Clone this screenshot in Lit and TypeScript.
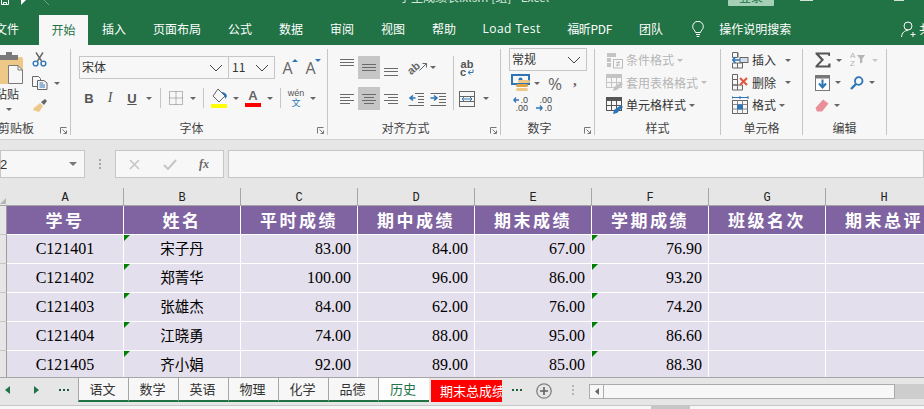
import { LitElement, html, css, svg } from "lit";
import { customElement } from "lit/decorators.js";

const s = (w: number, h: number, body: unknown) =>
  html`<svg width=${w} height=${h} viewBox="0 0 ${w} ${h}" fill="none">${body}</svg>`;
const lines = (w: number, h: number, ls: number[][], c = "#6a6a6a") =>
  s(w, h, ls.map(([a, b, y]) => svg`<line x1=${a} x2=${b} y1=${y} y2=${y} stroke=${c} stroke-width="1"/>`));
const caret = html`<i class="caret"></i>`;
const chevron = s(14, 8, svg`<polyline points="1,1 7,7 13,1" stroke="#444" stroke-width="1"/>`);
const launcher = html`<span class="launch">${s(7, 7, svg`<path d="M0.5 6.5V0.5H6.5M2.5 2.5L6 6M6.5 3.5V6.5H3.5" stroke="#777"/>`)}</span>`;

const scissors = s(15, 15, svg`<path d="M4 0.5L9.5 9M11 0.5L5.5 9" stroke="#666" stroke-width="1.4"/><circle cx="3.6" cy="11.5" r="2.4" stroke="#2e75b6" stroke-width="1.4"/><circle cx="11.4" cy="11.5" r="2.4" stroke="#2e75b6" stroke-width="1.4"/>`);
const copyIcon = s(16, 14, svg`<path d="M0.5 0.5H6.5L8.5 2.5V10.5H0.5Z" fill="#f7f7f7" stroke="#666"/><path d="M5.5 4.5H12L15 7V13.5H5.5Z" fill="#f7f7f7" stroke="#666"/><path d="M7.5 7H11M7.5 9H13M7.5 11H13" stroke="#2e75b6"/>`);
const painter = s(16, 15, svg`<path d="M8 5L11 8L7 14L1 12L2 10Z" fill="#edc887"/><path d="M9 4L13 1L15 3L12 7Z" fill="#666"/>`);
const clipboard = s(26, 33, svg`<path d="M0 5H23Q25 5 25 7V32H0Z" fill="#edc887"/><path d="M2 3H8V0H14V3H20V8H2Z" fill="#7a7a7a"/><path d="M10.5 13.5H20L24.5 18V31.5H10.5Z" fill="#f7f7f7" stroke="#7a7a7a"/><path d="M20 13.5V18H24.5" stroke="#7a7a7a"/>`);

const borderIcon = s(14, 14, svg`<path d="M0.5 0.5H13.5V13.5H0.5ZM7 0.5V13.5M0.5 7H13.5" stroke="#777" stroke-dasharray="1 1"/>`);
const bucket = s(17, 20, svg`<path d="M7 1L14 8L8 14L2 8Z" fill="#f7f7f7" stroke="#666"/><path d="M10 4Q15 4 16 8L14.5 11L13 7Z" fill="#2e75b6"/><rect x="0" y="16" width="16" height="4" fill="#ffff00"/>`);

const indentL = s(17, 14, svg`<path d="M7 1.5H16M10 4.5H16M10 7.5H16M10 10.5H16M0.5 13.5H16" stroke="#666"/><path d="M7.5 6H3M5 3.5L2 6L5 8.5" stroke="#2e75b6" stroke-width="1.6"/>`);
const indentR = s(17, 14, svg`<path d="M0.5 1.5H16M9 4.5H16M9 7.5H16M9 10.5H16M0.5 13.5H16" stroke="#666"/><path d="M0.5 6H6M4 3.5L7 6L4 8.5" stroke="#2e75b6" stroke-width="1.6"/>`);
const merge = s(16, 16, svg`<rect x="0.5" y="0.5" width="15" height="15" stroke="#666"/><path d="M0.5 5.5H15.5M0.5 10.5H15.5" stroke="#666"/><rect x="1" y="6" width="14" height="4" fill="#f7f7f7"/><path d="M3 8H13M5 6L3 8L5 10M11 6L13 8L11 10" stroke="#2e75b6"/>`);
const orientArrow = s(9, 9, svg`<path d="M0.5 8.5L7.5 1.5M3.5 1.5H7.5V5.5" stroke="#666"/>`);
const wrapArrow = s(7, 6, svg`<path d="M6 0.5V3.5H1.5M3.5 1.5L1 3.5L3.5 5.5" stroke="#2e75b6"/>`);
const currency = s(20, 19, svg`<rect x="1" y="1" width="17" height="9" stroke="#2e75b6" stroke-width="2"/><circle cx="9.5" cy="5.5" r="2" fill="#2e75b6"/><rect x="7" y="6" width="12" height="3" rx="1.5" fill="#edc887"/><rect x="5" y="10" width="12" height="3" rx="1.5" fill="#d9a441"/><rect x="5" y="14" width="12" height="3" rx="1.5" fill="#edc887"/>`);
const blueLeft = s(6, 6, svg`<path d="M6 3H1M3 0.5L0.8 3L3 5.5" stroke="#2e75b6" stroke-width="1.3"/>`);
const blueRight = s(7, 6, svg`<path d="M0 3H6M4 0.5L6.2 3L4 5.5" stroke="#2e75b6" stroke-width="1.3"/>`);

const condIcon = s(17, 17, svg`<path d="M1 1H10V5H1ZM1 6H5V10H1ZM1 11H5V15H1Z" fill="#c4c4c4"/><rect x="7.5" y="7.5" width="9" height="8.5" fill="#f7f7f7" stroke="#bcbcbc"/><path d="M10 10.5H14M10 13H14M13 9L11 14.5" stroke="#bcbcbc"/>`);
const tableIcon = (stroke: string, brush: string) =>
  s(17, 17, svg`<rect x="0.5" y="0.5" width="15" height="13" stroke=${stroke}/><rect x="1" y="1" width="14" height="3" fill=${stroke}/><path d="M5.5 4V13M10.5 4V13M1 8.5H15" stroke=${stroke}/><path d="M15 8L17 10L11 16L7 17L8 13Z" fill=${brush}/>`);
const insertIcon = s(17, 17, svg`<path d="M0.5 0.5H5.5V5.5H0.5ZM6 0.5V5.5M0.5 11H5.5V16H0.5ZM5.5 11H10.5V16H5.5Z" stroke="#666"/><rect x="8" y="5.5" width="8" height="5" fill="#cfdfef" stroke="#666"/><path d="M8 8H1M3.5 5L0.8 8L3.5 11" stroke="#2e75b6" stroke-width="1.5"/>`);
const deleteIcon = s(17, 17, svg`<path d="M0.5 0.5H5.5V5.5H0.5ZM0.5 11H5.5V16H0.5ZM5.5 11H10.5V16H5.5ZM0.5 5.5H5.5V11H0.5Z" stroke="#666"/><path d="M8 4L15 11M15 4L8 11" stroke="#e2553f" stroke-width="2"/>`);
const formatIcon = s(17, 18, svg`<path d="M0 1.5H16M0 0V3M8 0V3M16 0V3" stroke="#2e75b6"/><rect x="0.5" y="4.5" width="15" height="13" stroke="#666"/><path d="M0.5 8.5H15.5M0.5 13H15.5M5.5 4.5V17.5M10.5 4.5V17.5" stroke="#888"/><rect x="5" y="8.5" width="6" height="5" fill="#2e75b6"/>`);
const sigma = s(16, 16, svg`<path d="M0.5 0.5H15V4H13.5L13 2.5H4L9 7.8L3.5 13.5H13L13.5 11.5H15.5V15.5H0.5V13.8L6 8L0.5 2Z" fill="#555"/>`);
const sortIcon = s(17, 16, svg`<path d="M7 3H15L12.3 7V10.5L10 11.5V7Z" fill="#b5b5b5"/>`);
const fillIcon = s(15, 16, svg`<rect x="0.5" y="0.5" width="14" height="15" fill="#fff" stroke="#777"/><rect x="1" y="1" width="13" height="2.5" fill="#777"/><path d="M7.5 4.5V12M4 8.5L7.5 12.5L11 8.5" stroke="#2e75b6" stroke-width="2"/>`);
const searchIcon = s(14, 14, svg`<circle cx="8.7" cy="5" r="3.8" stroke="#2e75b6" stroke-width="1.8"/><path d="M6 8L1 13" stroke="#2e75b6" stroke-width="2.4"/>`);
const eraser = s(14, 13, svg`<path d="M8 0.5L13.5 4.5L7 12.5L2 12.5L0.5 9Z" fill="#ea8f99"/>`);
const bulb = s(12, 17, svg`<path d="M3.5 11.5C3 9 0.7 8.5 0.7 5.6A5.3 5.3 0 0 1 11.3 5.6C11.3 8.5 9 9 8.5 11.5ZM4 13.5H8M4.7 15.5H7.3" stroke="#fff"/>`);
const userIcon = s(15, 17, svg`<circle cx="7" cy="5" r="4" stroke="#fff"/><path d="M0.5 16C1 11.5 3.5 9.5 7 9.5M9.5 13.5H14.5M12 11V16" stroke="#fff"/>`);
const saveIcon = s(8, 6, svg`<path d="M0.5 0V4.5H7.5V0M2.5 4.5V2.5H5.5V4.5" stroke="#fff"/>`);
const undoIcon = s(7, 6, svg`<path d="M1 5L6 0H1" fill="#fff"/>`);
const redoIcon = s(7, 6, svg`<path d="M1 0L6 5" stroke="#6da384"/>`);
const xIcon = s(11, 11, svg`<path d="M1 1L10 10M10 1L1 10" stroke="#c6c6c6" stroke-width="1.6"/>`);
const checkIcon = s(14, 11, svg`<path d="M1 6L5 10L13 1" stroke="#c6c6c6" stroke-width="2"/>`);
const plusCircle = s(16, 16, svg`<circle cx="8" cy="8" r="7.2" stroke="#808080" stroke-width="1.3"/><path d="M8 4V12M4 8H12" stroke="#5f5f5f" stroke-width="1.6"/>`);

const columns = ["A", "B", "C", "D", "E", "F", "G", "H"];
const heads = ["学号", "姓名", "平时成绩", "期中成绩", "期末成绩", "学期成绩", "班级名次", "期末总评"];
const rows = [
  ["C121401", "宋子丹", "83.00", "84.00", "67.00", "76.90"],
  ["C121402", "郑菁华", "100.00", "96.00", "86.00", "93.20"],
  ["C121403", "张雄杰", "84.00", "62.00", "76.00", "74.20"],
  ["C121404", "江晓勇", "74.00", "88.00", "95.00", "86.60"],
  ["C121405", "齐小娟", "92.00", "89.00", "85.00", "88.30"],
];
const tabs = ["插入", "页面布局", "公式", "数据", "审阅", "视图", "帮助", "Load Test", "福昕PDF", "团队"];
const sheets = ["语文", "数学", "英语", "物理", "化学", "品德"];

@customElement("app-root")
export class AppRoot extends LitElement {
  static styles = css`
    :host { display: block; width: 924px; height: 409px; overflow: hidden; background: #f7f7f7; color: #444;
      font: 12px/1.2 "Noto Sans CJK SC", "Liberation Sans", sans-serif; }
    svg { display: block; flex: none; }
    .caret { display: block; flex: none; width: 0; height: 0; border: 3px solid transparent; border-top: 3.5px solid #666; border-bottom: 0; }

    .title { height: 14px; background: #217346; display: flex; overflow: hidden; color: #fff; }
    .title .q { display: flex; align-items: flex-start; padding-left: 1px; gap: 11px; width: 398px; flex: none; }
    .title .q svg:last-child { margin-left: 5px; }
    .title .name { margin-top: -11px; width: 329px; flex: none; font-size: 12px; line-height: 15px; white-space: nowrap; color: #d5e6db; }
    .login { width: 46px; height: 6px; flex: none; background: #a6d0b5; color: #217346; overflow: hidden; text-align: center; line-height: 15px; font-size: 12px; border-radius: 0 0 1px 1px; }
    .login span { display: block; margin-top: -11px; }
    .minb { width: 13px; height: 1px; background: #cfe3d7; margin-left: 26px; flex: none; }
    .maxb { width: 10px; height: 1px; background: #cfe3d7; margin-left: 81px; flex: none; }

    .tabs { height: 31px; background: #217346; display: flex; align-items: stretch; color: #fff; overflow: hidden; white-space: nowrap; }
    .tabs span { display: flex; align-items: center; padding: 0 13.5px; flex: none; }
    .tabs .file { padding: 0; margin-left: -5px; width: 44px; }
    .tabs .on { background: #f7f7f7; color: #217346; width: 49px; padding: 0 12.5px; box-sizing: border-box; margin-top: 1px; margin-right: 0.5px; }
    .tabs .lt { font-family: "Open Sans", sans-serif; letter-spacing: 0.45px; padding: 0 13px; }
    .tabs .pdf { padding: 0 13.5px; letter-spacing: -0.3px; }
    .tabs .bulb { padding: 0 0 0 15.5px; }
    .tabs .ask { padding: 0 0 0 15px; }
    .tabs .share { padding: 0 0 0 110px; gap: 3px; }

    .ribbon { height: 94px; display: flex; border-bottom: 1px solid #d2d2d2; background: #f7f7f7; }
    .g { position: relative; flex: none; height: 94px; box-sizing: border-box; display: flex; flex-direction: column; }
    .g.sep::after { content: ""; position: absolute; right: 0; top: 4px; bottom: 4px; width: 1px; background: #c6c6c6; }
    .body { height: 75px; box-sizing: border-box; }
    .lab { text-align: center; height: 16px; line-height: 16px; color: #444; padding-right: 1px; white-space: nowrap; }
    .launch { position: absolute; right: 4px; bottom: 5px; }
    .clip { width: 71px; } .font { width: 257px; } .align { width: 173px; } .num { width: 94px; }
    .sty { width: 126px; } .cell { width: 82px; } .edit { width: 84px; } .rest { flex: 1; }
    .font .lab { padding-right: 16px; }
    .align .lab { padding-right: 18px; }
    .num .lab { padding-right: 17px; }

    .clip .body { display: grid; grid-template-columns: 31px 38px; padding-top: 7px; }
    .paste { display: flex; flex-direction: column; align-items: flex-start; margin-left: -2px; }
    .paste b { font-weight: 400; color: #333; margin: 2px 0 0 -3px; line-height: 14px; white-space: nowrap; }
    .paste .caret { margin: 7px 0 0 8px; }
    .tools { display: flex; flex-direction: column; }
    .tools > * { margin-left: 1px; }
    .tools .copy { display: flex; align-items: center; gap: 6px; margin-top: 9px; }
    .tools .pt { margin-top: 8px; }
    .clip .lab { margin-left: -38px; }

    .font .body { padding: 11px 0 0 8px; }
    .frow { display: flex; height: 23px; }
    .sel { height: 23px; box-sizing: border-box; border: 1px solid #c6c6c6; background: #f7f7f7; display: flex; align-items: center; justify-content: space-between; padding: 0 5px 0 2px; color: #333; }
    .fname { width: 150px; } .fsize { width: 47px; margin-left: -1px; padding-left: 3px; }
    .big { position: relative; display: flex; font: 16px "Open Sans", sans-serif; color: #666; width: 23px; justify-content: center; align-items: center; }
    .big.first { margin-left: 1px; }
    .tri { position: absolute; right: 1px; top: 3px; width: 0; height: 0; border: 3px solid transparent; }
    .up { border-bottom: 3px solid #2e75b6; border-top: 0; }
    .dn { border-top: 3px solid #2e75b6; border-bottom: 0; }
    .frow2 { display: grid; height: 20px; margin-top: 9px; align-items: center; justify-items: center;
      grid-template-columns: 20px 22px 22px 12px 10px 22px 11px 10px 22px 11px 1px 22px 11px 10px 22px 11px; }
    .fb { font: bold 13px "Liberation Sans", sans-serif; color: #555; }
    .fi { font: italic 14px "Liberation Serif", serif; color: #555; }
    .fu { font: bold 13px "Liberation Sans", sans-serif; color: #555; text-decoration: underline; }
    .vs { width: 1px; height: 20px; background: #c6c6c6; }
    .fc { display: flex; flex-direction: column; align-items: center; width: 16px; font: bold 13px/13px "Liberation Sans", sans-serif; color: #666; }
    .fc i { display: block; width: 16px; height: 4px; background: #f00; margin-top: 1px; }
    .wen { display: flex; flex-direction: column; align-items: center; font: 9px/9px "Liberation Sans", sans-serif; color: #555; }
    .wen b { color: #2e75b6; font: 9px/9px "Noto Sans CJK SC", sans-serif; }

    .align .body { display: grid; padding: 11px 0 0 8px; grid-template-columns: 22px 22px 22px 28px 22px 3px 24px 14px; grid-template-rows: 23px 23px; row-gap: 8px; align-items: center; justify-items: center; }
    .hl { background: #c6c6c6; }
    .hl, .ac { height: 23px; width: 22px; display: flex; justify-content: center; }
    .al { justify-self: start; }
    .or { display: flex; align-items: center; margin-left: 6px; position: relative; width: 18px; height: 14px; }
    .or em { font: bold 11px "Liberation Sans", sans-serif; color: #666; transform: rotate(-40deg); display: block; margin-left: -1px; }
    .or svg { margin-left: -1px; margin-top: -3px; }
    .ind { margin-left: 6px; }
    .ind2 { margin-left: 0; }
    .vline { grid-row: 1 / 3; grid-column: 6; width: 1px; height: 54px; background: #c6c6c6; }
    .wrap { font: bold 11px/8px "Liberation Sans", sans-serif; color: #555; text-align: center; display: flex; flex-direction: column; align-items: center; }
    .wrap span { display: flex; align-items: center; gap: 1px; }

    .num .body { padding: 3px 0 0 8px; }
    .nsel { width: 78px; font-size: 12px; }
    .nrow { display: flex; align-items: center; height: 24px; }
    .nrow svg:first-child { margin-left: 2px; }
    .nrow .caret { margin-left: 3px; }
    .pct { font: 17px "Open Sans", sans-serif; color: #666; margin-left: 8px; width: 16px; }
    .cm { font: bold 15px "Liberation Serif", serif; color: #666; margin: -5px 0 0 9px; }
    .drow { display: flex; gap: 8px; margin: 1px 0 0 3px; font: 9px/8px "Liberation Sans", sans-serif; color: #444; }
    .d { display: flex; flex-direction: column; align-items: flex-end; width: 16px; }
    .d span { display: flex; align-items: center; gap: 1px; }

    .stack .body { padding: 4px 0 0 11px; }
    .srow { height: 22.5px; display: flex; align-items: center; white-space: nowrap; }
    .srow svg { margin-right: 3px; }
    .dis { color: #b5b5b5; }
    .dis .caret { border-top-color: #bcbcbc; }
    .dark { color: #333; }
    .srow .caret { margin-left: 3px; }
    .cell .srow .caret.far { margin-left: 9px; }

    .edit .body { display: grid; padding: 4px 0 0 12px; grid-template-columns: 35px 30px; grid-auto-rows: 22.5px; align-items: center; }
    .ec { display: flex; align-items: center; gap: 5px; }
    .az { display: flex; position: relative; width: 17px; height: 16px; color: #b5b5b5; font: 8px/8px "Liberation Sans", sans-serif; }
    .az em { font-style: normal; position: absolute; left: 0; }
    .az em:last-of-type { top: 8px; }
    .dim { border-top-color: #c6c6c6; }

    .fbar { height: 48px; background: #e6e6e6; box-sizing: border-box; padding-top: 10px; display: flex; }
    .box { height: 28px; box-sizing: border-box; border: 1px solid #c6c6c6; background: #f7f7f7; display: flex; align-items: center; }
    .nm { width: 85px; padding: 0 7px 0 0; justify-content: space-between; font: 13px "Liberation Sans", sans-serif; color: #333; }
    .nm .d2 { margin-left: -1px; }
    .nm .caret { border-width: 4px; border-top-width: 4px; border-top-color: #777; }
    .grip { width: 30px; display: flex; flex-direction: column; align-items: center; justify-content: center; gap: 2px; height: 28px; flex: none; }
    .grip i { display: block; width: 2px; height: 2px; background: #a6a6a6; }
    .fx { width: 109px; margin-right: 4px; padding-left: 13px; gap: 23px; flex: none; }
    .fx em { font: italic bold 12px "Liberation Serif", serif; color: #666; margin-left: -1px; }
    .inp { flex: 1; }

    .sheet { height: 189px; overflow: hidden; background: #e4dfec; }
    .r { display: grid; grid-template-columns: 7px repeat(8, 117px); width: 943px; }
    .ch { height: 18px; background: #e6e6e6; border-bottom: 1px solid #a6a6a6; box-sizing: border-box; }
    .ch > div { text-align: center; font: 12px/21px "Liberation Mono", monospace; color: #222; border-right: 1px solid #a6a6a6; height: 17px; overflow: hidden; }
    .ch > .corner { border: 0; position: relative; }
    .corner::after { content: ""; position: absolute; left: 0; bottom: 1px; border: 3px solid transparent; border-right-color: #b5b5b5; border-bottom-color: #b5b5b5; }
    .rh { background: #e6e6e6; border-right: 1px solid #9c9c9c; border-bottom: 1px solid #c6c6c6; box-sizing: border-box; }
    .hd { height: 29px; }
    .hd > div:not(.rh) { background: #8064a2; color: #fff; font-size: 17px; font-weight: 700; letter-spacing: 2.5px; line-height: 27px; text-align: center; border-right: 1px solid #fff; border-bottom: 1px solid #fff; box-sizing: border-box; white-space: nowrap; overflow: hidden; }
    .dr { height: 29px; }
    .c { position: relative; border-right: 1px solid #fff; border-bottom: 1px solid #fff; box-sizing: border-box; background: #e4dfec; color: #000; font: 16px/28px "Liberation Serif", serif; text-align: right; padding-right: 6px; }
    .c.mid { text-align: center; padding: 0; }
    .c.cjk { font: 14.5px/26px "Noto Sans CJK SC", sans-serif; text-align: center; padding: 0; }
    .c.flag::before { content: ""; position: absolute; left: 0; top: 0; border-style: solid; border-width: 6px 6px 0 0; border-color: #008000 transparent transparent transparent; }

    .sbar { height: 28px; background: #e6e6e6; box-sizing: border-box; border-top: 1px solid #a6a6a6; display: flex; color: #333; font-size: 13px; }
    .nav { width: 78px; flex: none; display: flex; align-items: center; padding: 0 0 4px 5px; box-sizing: border-box; }
    .nav svg:nth-child(2) { margin-left: 24px; }
    .dots { display: flex; gap: 2px; margin-left: 20px; }
    .dots i { display: block; width: 2px; height: 2px; background: #1c5f3a; }
    .st { height: 24px; background: #f7f7f7; border-bottom: 2px solid #217346; border-left: 1px solid #a6a6a6; width: 50px; box-sizing: border-box; line-height: 22px; text-align: center; padding-right: 2px; flex: none; }
    .st.act { color: #217346; background: #fdfdfd; }
    .st.cur { width: 51px; border-right: 0; }
    .red { width: 71px; height: 22px; background: #f00; color: #fff; margin: 2px 0 0 2px; padding-left: 9px; box-sizing: border-box; line-height: 21px; overflow: hidden; white-space: nowrap; flex: none; }
    .more { display: flex; gap: 2px; align-items: center; margin-left: 10px; width: 16px; flex: none; height: 24px; }
    .more i { display: block; width: 2px; height: 2px; background: #1c5f3a; }
    .plus { margin: 5px 0 0 8px; }
    .vgrip { width: 2px; display: flex; flex-direction: column; gap: 2px; justify-content: center; height: 24px; margin-left: 20px; flex: none; }
    .vgrip i { display: block; width: 2px; height: 2px; background: #b5b5b5; }
    .track { flex: 1; margin: 6px 0 0 15px; height: 15px; background: #cdcdcd; display: flex; }
    .lbtn { width: 15px; height: 15px; box-sizing: border-box; border: 1px solid #ababab; background: #f7f7f7; display: flex; align-items: center; justify-content: center; }
    .thumb { width: 291px; height: 15px; box-sizing: border-box; border: 1px solid #ababab; border-left: 0; background: #f7f7f7; }
    .status { height: 4px; box-sizing: border-box; background: #f7f7f7; border-top: 1px solid #c6c6c6; padding-left: 651px; }
    .status i { display: block; width: 39px; height: 3px; background: #c6c6c6; }
  `;

  private stackRow(icon: unknown, text: string, cls: string, far = false) {
    return html`<div class="srow ${cls}">${icon}<span>${text}</span><i class="caret ${far ? "far" : ""}"></i></div>`;
  }

  render() {
    return html`
      <div class="title">
        <div class="q">${saveIcon}${undoIcon}${redoIcon}</div>
        <div class="name">学生成绩表.xlsm [组] - Excel</div>
        <div class="login"><span>登录</span></div>
        <div class="minb"></div><div class="maxb"></div>
      </div>
      <div class="tabs">
        <span class="file">文件</span><span class="on">开始</span>
        ${tabs.map((t) => html`<span class=${t === "Load Test" ? "lt" : t === "福昕PDF" ? "pdf" : ""}>${t}</span>`)}
        <span class="bulb">${bulb}</span><span class="ask">操作说明搜索</span>
        <span class="share">${userIcon}共</span>
      </div>

      <div class="ribbon">
        <div class="g sep clip">
          <div class="body">
            <div class="paste">${clipboard}<b>粘贴</b><i class="caret"></i></div>
            <div class="tools">${scissors}<div class="copy">${copyIcon}${caret}</div><div class="pt">${painter}</div></div>
          </div>
          <div class="lab">剪贴板</div>${launcher}
        </div>

        <div class="g sep font">
          <div class="body">
            <div class="frow">
              <div class="sel fname"><span>宋体</span>${chevron}</div>
              <div class="sel fsize"><span>11</span>${chevron}</div>
              <div class="big first">A<i class="tri up"></i></div>
              <div class="big">A<i class="tri dn"></i></div>
            </div>
            <div class="frow2">
              <span class="fb">B</span><span class="fi">I</span><span class="fu">U</span>${caret}
              <i class="vs"></i>${borderIcon}${caret}<i class="vs"></i>
              ${bucket}${caret}<span></span>
              <div class="fc">A<i></i></div>${caret}<i class="vs"></i>
              <div class="wen"><span>wén</span><b>文</b></div>${caret}
            </div>
          </div>
          <div class="lab">字体</div>${launcher}
        </div>

        <div class="g sep align">
          <div class="body">
            <div class="ac">${lines(14, 23, [[0, 14, 3.5], [0, 14, 6.5], [0, 14, 9.5]])}</div>
            <div class="hl">${lines(14, 23, [[0, 14, 8.5], [0, 14, 11.5], [0, 14, 14.5]])}</div>
            <div class="ac">${lines(14, 23, [[0, 14, 12.5], [0, 14, 15.5], [0, 14, 19.5]])}</div>
            <div class="or al"><em>ab</em>${orientArrow}</div>
            <div class="al">${caret}</div>
            <div class="vline"></div>
            <div class="wrap"><span>ab</span><span>c${wrapArrow}</span></div>
            <span></span>
            <div class="ac">${lines(14, 23, [[0, 14, 7.5], [0, 10, 10.5], [0, 14, 13.5], [0, 10, 16.5]])}</div>
            <div class="hl">${lines(14, 23, [[0, 14, 7.5], [2, 12, 10.5], [0, 14, 13.5], [2, 12, 16.5]])}</div>
            <div class="ac">${lines(14, 23, [[0, 14, 7.5], [4, 14, 10.5], [0, 14, 13.5], [4, 14, 16.5]])}</div>
            <div class="ind al">${indentL}</div>
            <div class="ind2 al">${indentR}</div>
            ${merge}${caret}
          </div>
          <div class="lab">对齐方式</div>${launcher}
        </div>

        <div class="g sep num">
          <div class="body">
            <div class="sel nsel"><span>常规</span>${chevron}</div>
            <div class="nrow">${currency}${caret}<span class="pct">%</span><span class="cm">,</span></div>
            <div class="drow">
              <div class="d"><span>${blueLeft}.0</span><span>.00</span></div>
              <div class="d"><span>.00</span><span>${blueRight}.0</span></div>
            </div>
          </div>
          <div class="lab">数字</div>${launcher}
        </div>

        <div class="g sep sty stack">
          <div class="body">
            ${this.stackRow(condIcon, "条件格式", "dis")}
            ${this.stackRow(tableIcon("#c4c4c4", "#c4c4c4"), "套用表格格式", "dis")}
            ${this.stackRow(tableIcon("#555", "#2e75b6"), "单元格样式", "dark")}
          </div>
          <div class="lab">样式</div>
        </div>

        <div class="g sep cell stack">
          <div class="body">
            ${this.stackRow(insertIcon, "插入", "dark", true)}
            ${this.stackRow(deleteIcon, "删除", "dark", true)}
            ${this.stackRow(formatIcon, "格式", "dark")}
          </div>
          <div class="lab">单元格</div>
        </div>

        <div class="g sep edit">
          <div class="body">
            <div class="ec">${sigma}${caret}</div>
            <div class="ec"><span class="az"><em>A</em><em>Z</em>${sortIcon}</span><i class="caret dim"></i></div>
            <div class="ec">${fillIcon}${caret}</div>
            <div class="ec">${searchIcon}${caret}</div>
            <div class="ec">${eraser}${caret}</div>
          </div>
          <div class="lab">编辑</div>
        </div>
        <div class="g rest"></div>
      </div>

      <div class="fbar">
        <div class="box nm"><span class="d2">2</span>${caret}</div>
        <div class="grip"><i></i><i></i><i></i></div>
        <div class="box fx">${xIcon}${checkIcon}<em>fx</em></div>
        <div class="box inp"></div>
      </div>

      <div class="sheet">
        <div class="r ch"><div class="corner"></div>${columns.map((c) => html`<div>${c}</div>`)}</div>
        <div class="r hd"><div class="rh"></div>${heads.map((h) => html`<div>${h}</div>`)}</div>
        ${rows.map((r) => html`
          <div class="r dr">
            <div class="rh"></div>
            <div class="c mid">${r[0]}</div>
            <div class="c cjk flag">${r[1]}</div>
            <div class="c">${r[2]}</div><div class="c">${r[3]}</div><div class="c">${r[4]}</div>
            <div class="c flag">${r[5]}</div>
            <div class="c"></div><div class="c"></div>
          </div>`)}
      </div>

      <div class="sbar">
        <div class="nav">
          ${s(5, 8, svg`<path d="M5 0L0 4L5 8Z" fill="#217346"/>`)}
          ${s(5, 8, svg`<path d="M0 0L5 4L0 8Z" fill="#217346"/>`)}
          <div class="dots"><i></i><i></i><i></i></div>
        </div>
        ${sheets.map((t) => html`<div class="st">${t}</div>`)}
        <div class="st act cur">历史</div>
        <div class="red">期末总成绩</div>
        <div class="more"><i></i><i></i><i></i></div>
        <div class="plus">${plusCircle}</div>
        <div class="vgrip"><i></i><i></i><i></i></div>
        <div class="track">
          <div class="lbtn">${s(4, 7, svg`<path d="M4 0L0 3.5L4 7Z" fill="#666"/>`)}</div>
          <div class="thumb"></div>
        </div>
      </div>
      <div class="status"><i></i></div>
    `;
  }
}
